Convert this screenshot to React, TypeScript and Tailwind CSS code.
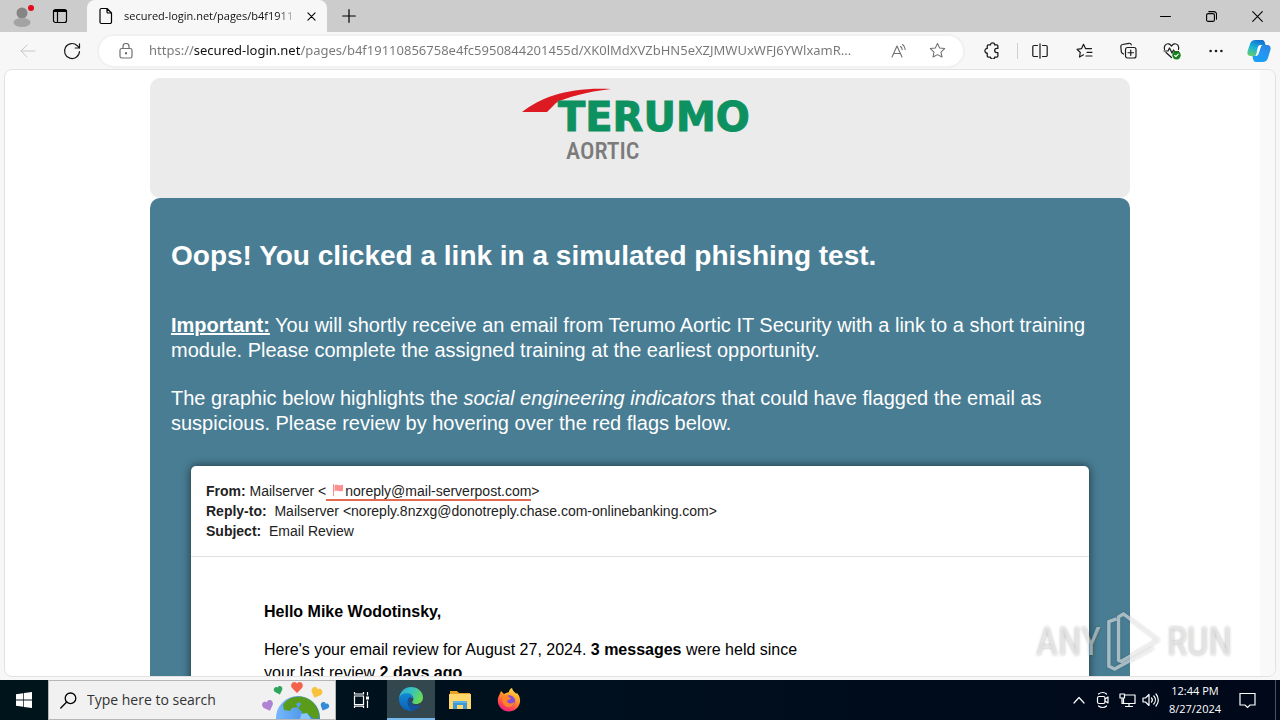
import type { ReactNode } from "react";

function IconButton({ label, className = "w-11", children }: { label: string; className?: string; children: ReactNode }) {
  return (
    <button type="button" aria-label={label} className={`flex shrink-0 items-center justify-center self-stretch ${className}`}>
      {children}
    </button>
  );
}

const line = { fill: "none", stroke: "currentColor", strokeLinecap: "round", strokeLinejoin: "round" } as const;

function TabStrip() {
  return (
    <header className="flex h-8 shrink-0 items-stretch bg-[#cccccc]">
      <IconButton label="Profile">
        <svg width="24" height="24" viewBox="0 0 24 24">
          <circle cx="12" cy="9" r="5.5" fill="#858585" />
          <ellipse cx="12" cy="18.5" rx="8.5" ry="4.5" fill="#a3a3a3" />
          <circle cx="21" cy="4" r="3" fill="#e00b1c" />
        </svg>
      </IconButton>
      <IconButton label="Tab actions" className="w-8">
        <svg width="16" height="16" viewBox="0 0 16 16" {...line} strokeWidth="1.2">
          <rect x="1.5" y="1.5" width="13" height="13" rx="2" />
          <path d="M2 3h12" strokeWidth="2.200" />
          <path d="M5.500 4v10.500" />
        </svg>
      </IconButton>
      <div className="ml-[11px] flex w-60 items-center rounded-t-lg bg-[#f7f7f7] pl-3">
        <svg width="14" height="18" viewBox="0 0 14 18" {...line} strokeWidth="1.200" className="shrink-0 text-black">
          <path d="M2.500 1.500h5.500l4.500 4.500v9a1.500 1.500 0 0 1-1.500 1.500h-8.500a1.500 1.500 0 0 1-1.500-1.500v-12a1.500 1.500 0 0 1 1.500-1.500zM8 1.500v3.500a1 1 0 0 0 1 1h3.500" />
        </svg>
        <span className="ml-[11px] w-[174px] overflow-hidden whitespace-nowrap bg-[linear-gradient(90deg,#111_88%,transparent)] bg-clip-text text-[11px] text-transparent">
          secured-login.net/pages/b4f1911
        </span>
        <IconButton label="Close tab" className="w-[26px]">
          <svg width="9" height="9" viewBox="0 0 10 10" {...line} strokeWidth="1.200"><path d="M1 1l8 8M9 1l-8 8" /></svg>
        </IconButton>
      </div>
      <IconButton label="New tab" className="w-[43px]">
        <svg width="14" height="14" viewBox="0 0 14 14" {...line} strokeWidth="1.200"><path d="M7 .7v12.600M.7 7h12.600" /></svg>
      </IconButton>
      <div className="flex-1" />
      <IconButton label="Minimize" className="w-[46px]">
        <svg width="11" height="11" viewBox="0 0 11 11" {...line}><path d="M.5 5.500h10" /></svg>
      </IconButton>
      <IconButton label="Restore" className="w-[46px]">
        <svg width="11" height="11" viewBox="0 0 11 11" {...line} strokeWidth="1.100">
          <rect x=".6" y="2.600" width="7.800" height="7.800" rx="1.500" />
          <path d="M2.800.6h5.200a2.500 2.500 0 0 1 2.500 2.500v5.200" />
        </svg>
      </IconButton>
      <IconButton label="Close" className="w-[46px]">
        <svg width="11" height="11" viewBox="0 0 11 11" {...line} strokeWidth="1.100"><path d="M.7.7l9.600 9.600M10.300.7L.7 10.300" /></svg>
      </IconButton>
    </header>
  );
}

const STAR = "M8 1.300l2.050 4.300 4.700.6-3.450 3.250.9 4.700L8 11.900l-4.200 2.250.9-4.700L1.250 6.200l4.700-.6z";

function Toolbar() {
  return (
    <nav className="flex h-[37px] shrink-0 items-stretch bg-[#f7f7f7] pl-[6px] text-[#1b1b1b]">
      <IconButton label="Back">
        <svg width="16" height="14" viewBox="0 0 16 14" {...line} className="text-[#c8c8c8]"><path d="M15 7H1M7 1L1 7l6 6" /></svg>
      </IconButton>
      <IconButton label="Refresh">
        <svg width="18" height="18" viewBox="0 0 18 18" {...line} strokeWidth="1.200">
          <path d="M16.500 9.500a7.500 7.500 0 1 1-2.200-5.800L16.500 6M16.500 1.800V6h-4.300" />
        </svg>
      </IconButton>
      <div className="my-auto ml-[5px] mr-[6px] flex h-[30px] min-w-0 flex-1 items-center rounded-full bg-white pl-5 pr-[6px] text-[#707070] ring-2 ring-[#f1f1f1]">
        <svg width="14" height="16" viewBox="0 0 14 16" {...line} strokeWidth="1.200" className="shrink-0">
          <rect x="1" y="5.500" width="12" height="9.500" rx="1.800" />
          <path d="M4 5.500v-2a3 3 0 0 1 6 0v2" />
          <circle cx="7" cy="10.300" r=".6" fill="currentColor" />
        </svg>
        <input
          aria-label="Address"
          readOnly
          value="https://secured-login.net/pages/b4f19110856758e4fc5950844201455d/XK0lMdXVZbHN5eXZJMWUxWFJ6YWlxamR..."
          className="ml-4 min-w-0 flex-1 bg-[linear-gradient(90deg,#767676_45px,#111_45px,#111_151px,#767676_151px)] bg-clip-text font-['Noto_Sans',sans-serif] text-[13px] text-transparent outline-none"
        />
        <IconButton label="Read aloud" className="w-9">
          <svg width="18" height="16" viewBox="0 0 18 16" {...line} strokeWidth="1.100">
            <path d="M2 14L7 3l5 11M3.700 10.500h6.600M10.500 3.500a4 4 0 0 1 1.700 3.200M12.500 1.500a6.500 6.500 0 0 1 2.700 5" />
          </svg>
        </IconButton>
        <IconButton label="Add to favorites" className="w-10">
          <svg width="17" height="17" viewBox="0 0 16 16" {...line}><path d={STAR} /></svg>
        </IconButton>
      </div>
      <IconButton label="Extensions">
        <svg width="17" height="17" viewBox="0 0 16 16" {...line} strokeWidth="1.200">
          <path d="M5 2.800h2a2 2 0 0 1 4 0h2a1 1 0 0 1 1 1v2.200h-1a2 2 0 0 0 0 4h1v3.200a1 1 0 0 1-1 1h-2a2 2 0 0 1-4 0H5a1 1 0 0 1-1-1V10.500a2.200 2.200 0 1 1 0-4.400V3.800a1 1 0 0 1 1-1z" />
        </svg>
      </IconButton>
      <div className="my-auto ml-1 h-4 w-px bg-[#cfcfcf]" />
      <IconButton label="Split screen">
        <svg width="16" height="16" viewBox="0 0 16 16" {...line} strokeWidth="1.200">
          <path d="M8 .8v14.400M5.500 2.500H2a1.200 1.200 0 0 0-1.200 1.200v8.600A1.200 1.200 0 0 0 2 13.500h3.500M10.500 2.500H14a1.200 1.200 0 0 1 1.200 1.200v8.600a1.200 1.200 0 0 1-1.200 1.200h-3.500" />
        </svg>
      </IconButton>
      <IconButton label="Favorites">
        <svg width="17" height="16" viewBox="0 0 17 16" {...line} strokeWidth="1.200">
          <path d="M7.500 11.800l-4 2.200.8-4.500L1 6.300l4.600-.7L7.500 1.300l2 4.300h6M11 9.300h5M10 13h6" />
        </svg>
      </IconButton>
      <IconButton label="Collections">
        <svg width="17" height="17" viewBox="0 0 17 17" {...line} strokeWidth="1.200">
          <rect x="5.500" y="5.500" width="10.500" height="10.500" rx="2" />
          <path d="M10.750 8v5.500M8 10.750h5.500M3.500 12L2.300 11.300a2 2 0 0 1-1-1.500L.8 4.500a2 2 0 0 1 1.800-2L9 1.300a2 2 0 0 1 2.300 1.500" />
        </svg>
      </IconButton>
      <IconButton label="Browser essentials">
        <svg width="18" height="18" viewBox="0 0 18 18" {...line} strokeWidth="1.200">
          <path d="M1.500 7.500C.5 4 3 1.500 5.500 1.800 7.300 2 8 3.500 8.500 4c.5-.5 1.200-2 3-2.200C14 1.500 16.500 4 15.500 7.500M3 10.500l5.500 5M1 9h4l1.500-3 2.500 5 1.500-3 1 1.500h4" />
          <circle cx="13.500" cy="13.300" r="4.200" fill="#13801b" stroke="none" />
          <path d="M11.700 13.500l1.200 1.100 2.300-2.400" stroke="#fff" />
        </svg>
      </IconButton>
      <IconButton label="Settings and more">
        <svg width="14" height="4" viewBox="0 0 14 4" fill="currentColor"><circle cx="1.600" cy="2" r="1.300" /><circle cx="7" cy="2" r="1.300" /><circle cx="12.400" cy="2" r="1.300" /></svg>
      </IconButton>
      <IconButton label="Copilot" className="w-[42px]">
        <svg width="24" height="24" viewBox="0 0 24 24">
          <defs>
            <linearGradient id="cp1" x1="0.600" y1="0" x2="0.200" y2="1"><stop offset="0" stopColor="#1272cf" /><stop offset=".5" stopColor="#18b3d8" /><stop offset="1" stopColor="#65cf6d" /></linearGradient>
            <linearGradient id="cp2" x1="0.700" y1="0" x2="0.300" y2="1"><stop offset="0" stopColor="#2b86e0" /><stop offset=".5" stopColor="#2496f5" /><stop offset="1" stopColor="#1aa0f5" /></linearGradient>
          </defs>
          <path d="M8.500 1h6.700c1.800 0 2.300 1.500 2.800 3l.5 2h-3c-2 0-3 1-3.500 2.700l-2 6.300c-.4 1.500-1.300 2-2.600 2H3.500C.8 17-.1 14.700.6 12.300L3 5C3.900 2.300 5.500 1 8.500 1z" fill="url(#cp1)" />
          <path d="M15.500 23H9c-1.900 0-2.500-1.600-3-3.200L5.400 17h2.700c2 0 3-1 3.500-2.700L13.700 8c.4-1.400 1.300-2 2.600-2h4.200c2.700 0 3.600 2.300 2.900 4.700L21 19c-.9 2.700-2.500 4-5.500 4z" fill="url(#cp2)" />
          <path d="M10.800 8.300c.5-1.600 1.500-2.300 3.200-2.300h1.600c-1 .4-1.600 1-1.900 2l-2.100 6.300C11 16.200 10 17 8.200 17c.5-.5.9-1.100 1.100-2z" fill="#fff" />
        </svg>
      </IconButton>
    </nav>
  );
}

function Logo() {
  return (
    <svg width="240" height="88" viewBox="0 0 240 88" role="img" aria-label="Terumo Aortic" className="overflow-visible">
      <path d="M2 29C22 14 48 4 91 6C66 9 47 14 36 20L27 29Z" fill="#dd1a22" />
      <text x="38" y="48" fontSize="40" fontWeight="700" fill="#0d9160" stroke="#0d9160" strokeWidth="1" fontFamily='"DejaVu Sans", sans-serif'>TERUMO</text>
      <text x="46" y="76" fontSize="24" fontWeight="500" fill="#7b7b7b" fontFamily='"Roboto Condensed", "Liberation Sans Narrow", Roboto, sans-serif'>AORTIC</text>
    </svg>
  );
}

function Page() {
  return (
    <main className="mx-1 mb-[3px] flex min-h-0 flex-1 overflow-hidden rounded-lg border border-[#e2e2e2] bg-white font-['Liberation_Sans',sans-serif]">
      <div className="min-w-0 flex-1 overflow-hidden pl-[15px] pt-2">
        <div className="mx-auto max-w-[980px]">
          <div className="flex h-[120px] justify-center rounded-[10px] bg-[#ebebeb] pt-[5px]"><Logo /></div>
          <article className="rounded-t-[10px] bg-[#497d93] px-[21px] pb-10 pt-[42px] text-xl leading-[25px] text-white">
            <h1 className="text-[28px] font-bold leading-8">Oops! You clicked a link in a simulated phishing test.</h1>
            <p className="mt-[41px]">
              <strong className="underline">Important:</strong> You will shortly receive an email from Terumo Aortic IT Security with a link to a short training module. Please complete the assigned training at the earliest opportunity.
            </p>
            <p className="mt-[23px]">
              The graphic below highlights the <em>social engineering indicators</em> that could have flagged the email as suspicious. Please review by hovering over the red flags below.
            </p>
            <section className="mx-5 mt-[30px] rounded-[5px] bg-white text-[#222] shadow-[0_0_10px_rgba(0,0,0,0.6)]">
              <div className="border-b border-[#e0e0e0] p-[15px] text-sm leading-5">
                <p>
                  <b>From:</b> Mailserver &lt;
                  <span className="border-b-2 border-[#e26a52]">
                    <svg width="12" height="12" viewBox="0 0 12 12" className="ml-[6px] mr-px inline align-[0px]" fill="#fa9090"><path d="M1 0h1v12H1zM2.500 1.200c3-1.500 4.500 1 8.500-.4v6c-4 1.500-5.500-1-8.500.4z" /></svg>
                    noreply@mail-serverpost.com
                  </span>
                  &gt;
                </p>
                <p><b>Reply-to:</b>&nbsp; Mailserver &lt;noreply.8nzxg@donotreply.chase.com-onlinebanking.com&gt;</p>
                <p><b>Subject:</b>&nbsp; Email Review</p>
              </div>
              <div className="px-[73px] pb-10 pt-[43px] text-base leading-[23px] text-black">
                <p className="font-bold">Hello Mike Wodotinsky,</p>
                <p className="mt-[15px] max-w-[540px]">
                  Here's your email review for August 27, 2024. <b>3 messages</b> were held since<br />your last review <b>2 days ago</b>.
                </p>
              </div>
            </section>
          </article>
        </div>
      </div>
      <div className="w-[15px] shrink-0 bg-[#f9f9f9]" />
    </main>
  );
}

function Watermark() {
  return (
    <div className="pointer-events-none absolute bottom-[46px] right-12 flex items-center gap-1 font-['Roboto_Condensed','Liberation_Sans_Narrow',sans-serif] text-[38px] leading-none text-white/50 [text-shadow:0_0_3px_rgba(0,0,0,0.3)]">
      <span>ANY</span>
      <svg width="58" height="64" viewBox="0 0 60 64" fill="none" stroke="#fff" strokeOpacity=".55" strokeWidth="3.500" strokeLinejoin="round" className="drop-shadow-[0_0_1px_rgba(0,0,0,0.35)]">
        <path d="M12 8L4 11v46l6 3 40-22M14 51V6l5-3 36 27-38 22z" />
      </svg>
      <span>RUN</span>
    </div>
  );
}

const HEART = "M6 11L1 6C-1 3 1 0 3.500 0 5 0 6 1.500 6 1.500S7 0 8.500 0C11 0 13 3 11 6z";

function Globe() {
  return (
    <svg width="70" height="38" viewBox="0 0 70 38" className="shrink-0">
      <defs><linearGradient id="sea" x2="1"><stop offset="0" stopColor="#77b7ff" /><stop offset="1" stopColor="#3586d8" /></linearGradient></defs>
      <circle cx="37" cy="37" r="22" fill="url(#sea)" />
      <path d="M22 24c4-6 10-9 18-8l-1 5-4 2 2 3-6 1-2 3-6-1zM39 15.500c10 1 17 8 19 17v5h-6l-4-4-6 1-1-4-4-3 3-4-2-4z" fill="#5b9b1c" />
      <path d="M39 38l1-5 6-1 4 6z" fill="#8bc7ff" />
      <g>
        <path d={HEART} transform="translate(30 1)" fill="#f2634b" />
        <path d={HEART} transform="translate(12 7) rotate(-18) scale(.75)" fill="#2da55d" />
        <path d={HEART} transform="translate(52 5) rotate(22) scale(.95)" fill="#f9c23c" />
        <path d={HEART} transform="translate(0 22) rotate(-20) scale(.95)" fill="#b083d2" />
        <path d={HEART} transform="translate(61 20) rotate(25) scale(.75)" fill="#338bd5" />
      </g>
    </svg>
  );
}

function Taskbar() {
  return (
    <footer className="flex h-10 shrink-0 items-stretch bg-[linear-gradient(90deg,#00151b,#000f1e_50%,#000819)] text-white">
      <IconButton label="Start" className="w-12">
        <svg width="16" height="16" viewBox="0 0 16 16" fill="#fff"><path d="M0 2.200L7.300 1.200v6.400H0zM8 1.100L16 0v7.600H8zM0 8.400h7.300v6.400L0 13.800zM8 8.400h8V16l-8-1.100z" /></svg>
      </IconButton>
      <label className="flex w-72 items-center border border-[#b6b6b6] bg-[#f1f1f1] pl-[11px] text-black">
        <svg width="17" height="17" viewBox="0 0 17 17" {...line} strokeWidth="1.300"><circle cx="10.500" cy="6.300" r="5.300" /><path d="M6.700 10L.8 16" /></svg>
        <input aria-label="Search" placeholder="Type here to search" className="ml-[10px] min-w-0 flex-1 bg-transparent text-sm outline-none placeholder:text-[#333]" />
        <Globe />
        <span className="w-1" />
      </label>
      <IconButton label="Task view" className="w-[51px]">
        <svg width="17" height="16" viewBox="0 0 17 16" fill="none" stroke="#fff" strokeWidth="1.200">
          <path d="M1.500 4h9v8.500h-9zM1.500 0v2h9V0M1.500 16v-1.800h9V16M14.500 0v3.500M14.500 8.500V16" /><path d="M13 4.500h3v3h-3z" fill="#fff" stroke="none" />
        </svg>
      </IconButton>
      <IconButton label="Microsoft Edge" className="w-12 border-b-2 border-[#76b9ed] bg-[#33474e]">
        <svg width="24" height="24" viewBox="0 0 24 24">
          <defs>
            <linearGradient id="eg" x2="1" y2=".4"><stop offset="0" stopColor="#2ba8dc" /><stop offset=".5" stopColor="#35c1c4" /><stop offset="1" stopColor="#66d95a" /></linearGradient>
            <linearGradient id="eb" x2="0" y2="1"><stop offset="0" stopColor="#1389d2" /><stop offset="1" stopColor="#0b61b7" /></linearGradient>
          </defs>
          <path d="M0 11C1 4.500 6 0 12 0c7 0 12 5 12 10.500 0 4-3 6.500-7 6.500-3 0-4.500-1.200-3.500-2.500C16 11 13 7 8.500 7 4 7 1 9 0 11z" fill="url(#eg)" />
          <path d="M0 11C1 8 5 5.800 9 6.300c3.500.4 5.500 3 5.200 6-1-1.800-4-2.300-5.200.5C7.500 16 10 22 15 23.500 7 25.500 0 20 0 12z" fill="url(#eb)" />
          <path d="M8.800 13.500c0-2 1.500-3.500 3.400-3.500-3 4 1 8.700 5.300 8.700 1.700 0 3-.5 4.300-1.200C20 21 17 23.500 13.500 23.500 10.500 22 8.800 18 8.800 13.500z" fill="#13509e" />
        </svg>
      </IconButton>
      <IconButton label="File Explorer" className="w-[49px]">
        <svg width="22" height="20" viewBox="0 0 22 20">
          <path d="M1 1h7l2 2h11v4H1z" fill="#e8a325" /><path d="M0 4h22v15H0z" fill="#ffd76b" />
          <path d="M4 19v-8h14v8h-4v-4H8v4z" fill="#3c9ad6" /><path d="M4 11h14v2H4z" fill="#58b4e5" />
        </svg>
      </IconButton>
      <IconButton label="Firefox" className="w-[49px]">
        <svg width="24" height="24" viewBox="0 0 24 24">
          <defs><linearGradient id="ff" x1=".8" y1="0" x2=".3" y2="1"><stop offset="0" stopColor="#ffe64b" /><stop offset=".45" stopColor="#ff9328" /><stop offset=".75" stopColor="#ff4850" /><stop offset="1" stopColor="#e91e85" /></linearGradient></defs>
          <path d="M4 3l3 3 2-1 3-1C12 2 13.500.6 15 0c.5 3 3 4 4.500 6V4.500C22 7 23.500 10 23 14c-.8 5.600-5.500 9.500-11 9.500C5.500 23.500.8 18.500.8 12.500.8 10 1.500 8 2.600 6.500z" fill="url(#ff)" />
          <circle cx="12.300" cy="13" r="5.800" fill="#814cd8" />
          <path d="M5 9c2-2 5-2 7 0l2 1.500c-1 1.500-3 1-4 2.500 1 3 5 3 7.500 1-1 4-4 5.500-7 5C7 18.300 5 15 5 9z" fill="#ff8427" />
        </svg>
      </IconButton>
      <div className="flex-1" />
      <IconButton label="Show hidden icons" className="w-6">
        <svg width="12" height="8" viewBox="0 0 12 8" {...line} strokeWidth="1.200"><path d="M1 7l5-5.500L11 7" /></svg>
      </IconButton>
      <IconButton label="Meet now" className="w-6">
        <svg width="14" height="18" viewBox="0 0 14 18" {...line} strokeWidth="1.200"><rect x="1.500" y="5.500" width="7.500" height="7" rx="1.500" /><path d="M9 8l3-2v6l-3-2M2.500 3c2.500-2 6-2 8 0M2.500 15c2.500 2 6 2 8 0" /></svg>
      </IconButton>
      <IconButton label="Network" className="w-6">
        <svg width="17" height="15" viewBox="0 0 17 15" {...line} strokeWidth="1.200"><path d="M6 2h10v8.500H4.500V6M10 10.500V13.500M6.500 13.500h7M1 1h4.500v4H1zM3 5v5.500h1" /></svg>
      </IconButton>
      <IconButton label="Volume" className="w-6">
        <svg width="18" height="14" viewBox="0 0 18 14" {...line} strokeWidth="1.200"><path d="M1 5h2.500L7 1.500v11L3.500 9H1zM9.500 5a3 3 0 0 1 0 4M11.800 3a6 6 0 0 1 0 8M14 1a9 9 0 0 1 0 12" /></svg>
      </IconButton>
      <button type="button" className="w-16 text-center text-[11px] leading-[18px]">
        <span className="block">12:44 PM</span>
        <span className="block">8/27/2024</span>
      </button>
      <IconButton label="Notifications" className="w-10">
        <svg width="17" height="17" viewBox="0 0 17 17" fill="none" stroke="#fff" strokeWidth="1.200"><path d="M1 1.500h15v11.500h-5L8.500 15.500 6 13H1z" /></svg>
      </IconButton>
      <div className="ml-2 w-[5px] border-l border-[#4b5260]" />
    </footer>
  );
}

export default function App() {
  return (
    <div className="relative flex h-screen flex-col overflow-hidden bg-[#f7f7f7] font-['Open_Sans',sans-serif] text-black">
      <TabStrip />
      <Toolbar />
      <Page />
      <Watermark />
      <Taskbar />
    </div>
  );
}
